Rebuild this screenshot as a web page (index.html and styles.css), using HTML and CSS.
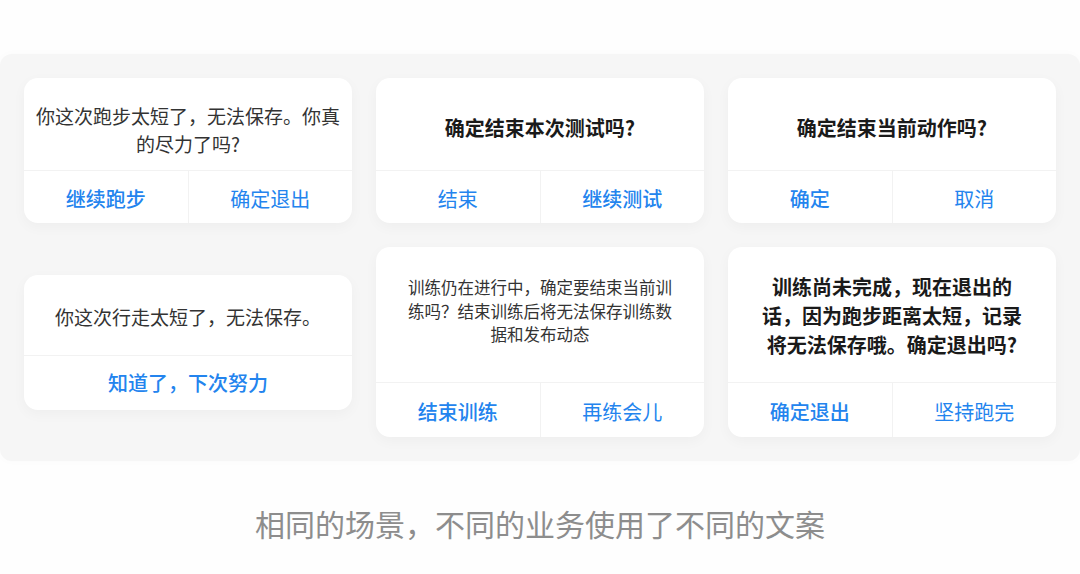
FILE: index.html
```html
<!DOCTYPE html>
<html lang="zh-CN">
<head>
    <meta charset="UTF-8">
    <meta name="viewport" content="width=device-width, initial-scale=1.0">
    <title>弹窗文案对比</title>
    <link rel="stylesheet" href="styles.css">
</head>
<body>
    <div class="panel">
        <!-- 第一行 -->
        <div class="dialog">
            <div class="msg msg-two">你这次跑步太短了，无法保存。你真<br>的尽力了吗?</div>
            <div class="actions">
                <span class="btn strong">继续跑步</span>
                <span class="btn">确定退出</span>
            </div>
        </div>
        <div class="dialog">
            <div class="msg title">确定结束本次测试吗?</div>
            <div class="actions">
                <span class="btn">结束</span>
                <span class="btn strong">继续测试</span>
            </div>
        </div>
        <div class="dialog">
            <div class="msg title">确定结束当前动作吗?</div>
            <div class="actions">
                <span class="btn strong">确定</span>
                <span class="btn">取消</span>
            </div>
        </div>

        <!-- 第二行 -->
        <div class="dialog">
            <div class="msg msg-short">你这次行走太短了，无法保存。</div>
            <div class="actions tall">
                <span class="btn strong single">知道了，下次努力</span>
            </div>
        </div>
        <div class="dialog">
            <div class="msg msg-small">训练仍在进行中，确定要结束当前训<br>练吗？结束训练后将无法保存训练数<br>据和发布动态</div>
            <div class="actions tall">
                <span class="btn strong">结束训练</span>
                <span class="btn">再练会儿</span>
            </div>
        </div>
        <div class="dialog">
            <div class="msg title msg-three">训练尚未完成，现在退出的<br>话，因为跑步距离太短，记录<br>将无法保存哦。确定退出吗?</div>
            <div class="actions tall">
                <span class="btn strong">确定退出</span>
                <span class="btn">坚持跑完</span>
            </div>
        </div>
    </div>

    <p class="caption">相同的场景，不同的业务使用了不同的文案</p>
</body>
</html>
```

FILE: styles.css
```css
body { margin: 0; padding-top: 54px; background: #fefefe; font-family: "Noto Sans CJK SC", "Noto Sans", sans-serif; color: #333; }

.panel { display: grid; grid-template-columns: repeat(3, 328px); column-gap: 24px; row-gap: 24px; align-items: center; padding: 24px; background: #f6f6f6; border-radius: 12px; box-shadow: 0 0 10px rgba(0,0,0,0.02); }

.dialog { background: #fff; border-radius: 14px; box-shadow: 0 4px 14px rgba(0,0,0,0.035); overflow: hidden; }

.msg { display: flex; align-items: center; justify-content: center; box-sizing: border-box; height: 92px; padding-top: 8px; font-size: 19px; line-height: 28px; text-align: center; }
.msg-two { padding-top: 12px; }
.msg-short { height: 80px; padding-top: 5px; }
.msg-small { height: 135px; padding: 0 0 6px; font-size: 16.5px; line-height: 23.5px; }
.title { font-size: 20px; font-weight: 600; color: #1a1a1a; }
.msg-three { height: 135px; padding-top: 2px; line-height: 29px; }

.actions { display: flex; height: 53px; border-top: 1px solid #f2f2f2; box-sizing: border-box; }
.actions.tall { height: 55px; }
.btn { flex: 1; display: flex; align-items: center; justify-content: center; padding-top: 2px; font-size: 20px; color: #2384ee; }
.btn + .btn { border-left: 1px solid #f2f2f2; }
.btn.strong { font-weight: 500; }
.btn.single { padding-top: 0; }

.caption { margin: 42px 0 0; font-size: 30px; line-height: 40px; text-align: center; color: #8d8d8d; }
```
